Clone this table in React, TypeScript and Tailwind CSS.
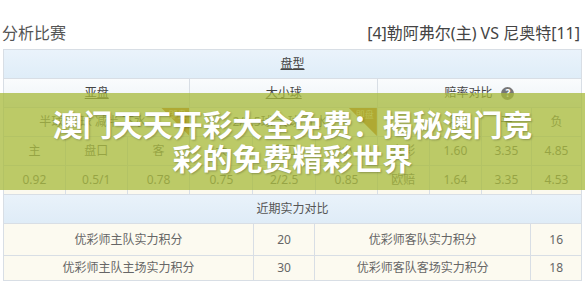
import React from 'react';

type CellProps = {
  children?: React.ReactNode;
  className?: string;
};

const Cell = ({ children, className = '' }: CellProps) => (
  <div className={`flex items-center justify-center ${className}`}>{children}</div>
);

// orange corner tag in the top right of a cell
const CornerTag = ({ label }: { label: string }) => (
  <div className="absolute top-0 right-0 w-[28px] h-[28px]">
    <div className="absolute inset-0 bg-[#c87a20] [clip-path:polygon(0_0,100%_0,100%_100%)]" />
    <span className="absolute top-[1px] right-[3px] text-[9px] leading-[11px] text-[#f4d59c]">{label}</span>
  </div>
);

export default function App() {
  const oddsTop = [
    { v: '主', c: 'bg-[#fbf9ef]' },
    { v: '盘口', c: 'bg-[#fbf9ef]' },
    { v: '客', c: 'bg-[#fbf9ef]' },
    { v: '大', c: 'bg-[#fbf9ef]' },
    { v: '盘口', c: 'bg-[#fbf9ef]' },
    { v: '小', c: 'bg-[#fbf9ef]' },
    { v: '竞彩', c: 'bg-[#fbf9ef]' },
    { v: '1.60', c: 'bg-[#fbf9ef]' },
    { v: '3.35', c: 'bg-[#fbf9ef]' },
    { v: '4.85', c: 'bg-[#fbf9ef]' },
  ];
  const oddsBottom = ['0.92', '0.5/1', '0.78', '0.75', '2/2.5', '0.85', '欧赔', '1.64', '3.35', '4.53'];

  const strength = [
    { home: '优彩师主队实力积分', hv: '20', away: '优彩师客队实力积分', av: '16' },
    { home: '优彩师主队主场实力积分', hv: '30', away: '优彩师客队客场实力积分', av: '18' },
  ];

  return (
    <div className="relative w-[585px] h-[283px] overflow-hidden bg-white font-['Noto_Sans','Noto_Sans_CJK_SC',sans-serif]">
      {/* title line */}
      <div className="h-[49px] flex items-end justify-between pb-[6px] pl-[2px] pr-[5px]">
        <span className="text-[16px] leading-[20px] text-[#555]">分析比赛</span>
        <span className="text-[16px] leading-[20px] text-[#444]">[4]勒阿弗尔(主) VS 尼奥特[11]</span>
      </div>

      <div className="pl-[3px] pr-[3px] text-[12px] text-[#666]">
        {/* odds table */}
        <div className="grid grid-cols-[62fr_62fr_63fr_63fr_63fr_62fr_52fr_52fr_50fr_50fr] grid-rows-[repeat(5,28px)] gap-px bg-[#d8dee5] border border-b-0 border-[#d8dee5]">
          <Cell className="col-span-10 bg-gradient-to-b from-[#eaf3fb] to-[#dfedf8] text-[#444] underline">盘型</Cell>

          <Cell className="col-span-3 bg-gradient-to-b from-[#fafcfd] to-[#eef3f7] text-[#444] underline">亚盘</Cell>
          <Cell className="col-span-3 bg-gradient-to-b from-[#fafcfd] to-[#eef3f7] text-[#444] underline">大小球</Cell>
          <Cell className="col-span-4 gap-[9px] bg-gradient-to-b from-[#fafcfd] to-[#eef3f7] text-[#444]">
            <span>赔率对比</span>
            <span className="w-[13px] h-[13px] rounded-full bg-[#777] text-white text-[10px] leading-[13px] font-bold text-center">?</span>
          </Cell>

          <Cell className="relative col-span-3 bg-[#fbf9ef]">
            <span className="pr-[8px]">半球/一球 减半 下水</span>
            <CornerTag label="即盘" />
          </Cell>
          <Cell className="relative col-span-3 bg-[#fbf9ef]">
            <span className="pr-[8px]">2/2.5球 大球 升水</span>
            <CornerTag label="即盘" />
          </Cell>
          <Cell className="bg-[#fbf9ef]" />
          <Cell className="bg-[#fbf9ef]">胜</Cell>
          <Cell className="bg-[#fbf9ef]">平</Cell>
          <Cell className="bg-[#fbf9ef]">负</Cell>

          {oddsTop.map((o, i) => (
            <Cell key={'t' + i} className={o.c}>{o.v}</Cell>
          ))}
          {oddsBottom.map((v, i) => (
            <Cell key={'b' + i} className="bg-[#fbf9ef]">{v}</Cell>
          ))}
        </div>

        {/* recent strength */}
        <div className="grid grid-cols-[251fr_61fr_217fr_50fr] grid-rows-[28px_31px_24px] gap-px bg-[#d8dee5] border border-[#d8dee5]">
          <Cell className="col-span-4 bg-gradient-to-b from-[#e9f2fa] to-[#dfecf7] text-[#555]">近期实力对比</Cell>
          {strength.map((r, i) => (
            <React.Fragment key={i}>
              <Cell className="bg-[#fcfaf0]">{r.home}</Cell>
              <Cell className="bg-[#fcfaf0]">{r.hv}</Cell>
              <Cell className="bg-[#fcfaf0]">{r.away}</Cell>
              <Cell className="bg-[#fcfaf0]">{r.av}</Cell>
            </React.Fragment>
          ))}
        </div>
      </div>

      {/* green headline band over the table */}
      <div className="absolute left-0 top-[93px] w-full h-[97px] bg-[#a7b93a]/75 flex flex-col items-center justify-center">
        <span className="text-[30px] leading-[34px] font-bold text-white [text-shadow:1px_1px_2px_rgba(0,0,0,0.25)]">澳门天天开彩大全免费：揭秘澳门竞</span>
        <span className="text-[30px] leading-[34px] font-bold text-white [text-shadow:1px_1px_2px_rgba(0,0,0,0.25)]">彩的免费精彩世界</span>
      </div>
    </div>
  );
}
